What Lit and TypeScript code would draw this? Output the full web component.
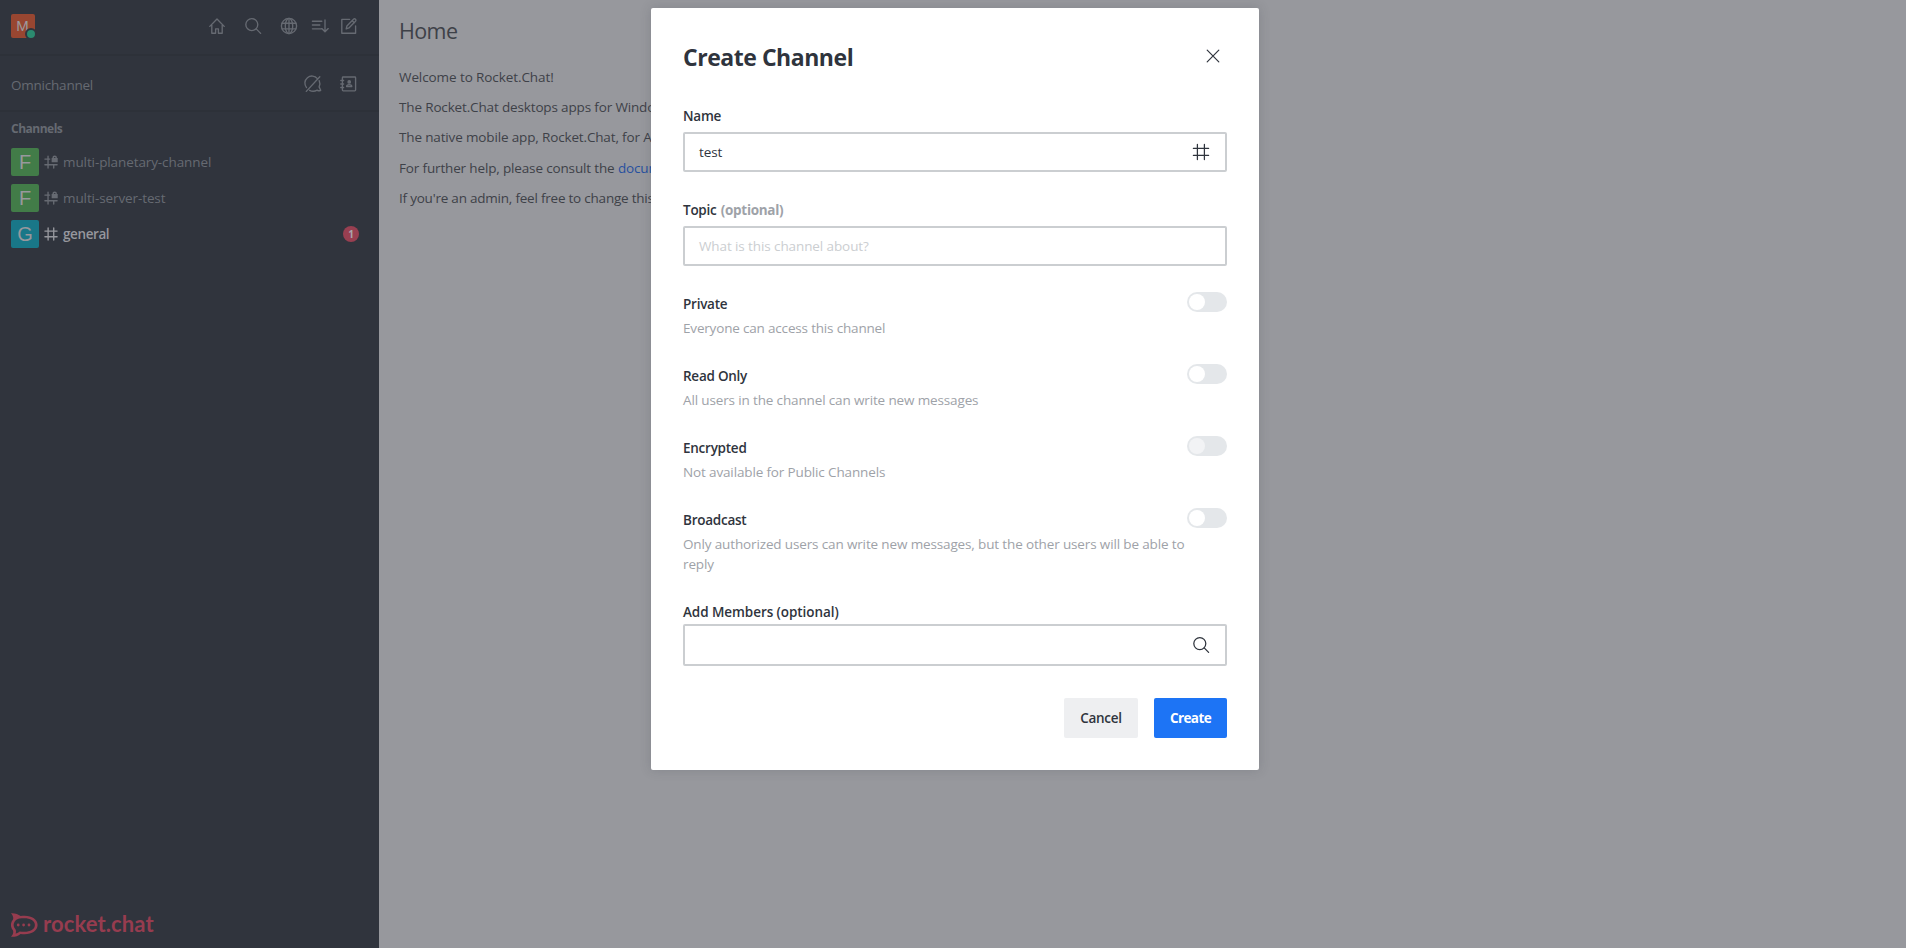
import { LitElement, html, css, svg, nothing } from "lit";
import { customElement, property } from "lit/decorators.js";
import { classMap } from "lit/directives/class-map.js";

const hash = svg`<path d="M6.4 2.4v15.2M13.4 2.4v15.2M2.4 6.4h15.2M2.4 13.4h15.2"/>`;

const icons: Record<string, unknown> = {
  home: svg`<path d="M2.8 10.4L10 3l7.2 7.4M4.8 9v8.2h3.8v-4.4h2.8v4.4h3.8V9"/>`,
  search: svg`<circle cx="8.8" cy="8.6" r="6"/><path d="M13.2 12.9l4.4 4.5"/>`,
  globe: svg`<circle cx="10" cy="10" r="7.6"/><ellipse cx="10" cy="10" rx="3.7" ry="7.6"/><path d="M10 2.4v15.2M3.1 7.2h13.8M3.1 12.8h13.8"/>`,
  sort: svg`<path d="M2.4 5.2h9.4M2.4 9h7.4M2.4 12.8h9.4M15 4v11.6M11.8 12.6l3.2 3.2 3.2-3.2"/>`,
  edit: svg`<path d="M10.6 3.4H2.8v13.8h13.8V9.8"/><path d="M7.2 12.9l.7-3 6.6-6.6c.6-.6 1.4-.6 2 0s.6 1.4 0 2l-6.6 6.6zM13.2 4.7l2.1 2.1"/>`,
  chatOff: svg`<path d="M14.4 4.6A7 7 0 0 0 3.5 13.6M16.2 6.6c.9 2 .9 4.3-.1 6.3l1.6 3.4c-1.3.7-2.5.6-3.5-.2-2.5 1.4-5.2 1.5-7.6.2"/><path d="M3.3 17.4L16.800 2.800"/>`,
  contacts: svg`<rect x="3.4" y="3" width="13.2" height="13.9" rx=".8"/><path d="M1.8 6.5h2.8M1.800 10h2.800M1.800 13.500h2.800"/><circle cx="10.200" cy="7.900" r="1.200" fill="currentColor"/><path d="M7.600 12.500c0-2.500 5.200-2.500 5.200 0z"/>`,
  hash,
  hashLock: svg`<path d="M6.300 2.800v14.800M13.400 13.400v4.200M2.400 6.400h6M2.400 13.400h15.200"/><path stroke="none" fill="currentColor" d="M10.800 5h.9a2.900 3 0 0 1 5.800 0h.9v5.400h-7.600zM13.600 5h2.100a1 1.200 0 0 0-2.100 0z"/>`,
  close: svg`<path d="M4.200 4.200l11.600 11.600M15.800 4.200L4.200 15.800"/>`,
};

@customElement("ui-icon")
class UiIcon extends LitElement {
  static styles = css`
    :host { display: inline-flex; flex: none; width: 20px; height: 20px; }
    .glyph { width: 100%; height: 100%; fill: none; stroke: currentColor; stroke-width: var(--stroke, 1.35); stroke-linejoin: round; stroke-linecap: round; }
  `;
  @property() name = "";
  render() {
    return html`<svg class="glyph" viewBox="0 0 20 20">${icons[this.name]}</svg>`;
  }
}

@customElement("side-bar")
class SideBar extends LitElement {
  static styles = css`
    :host { display: flex; flex-direction: column; flex: none; width: 379px; background: #30343d; color: #666a72; font-size: 13.5px; line-height: 20px; }
    .top { display: flex; align-items: center; height: 56px; padding: 0 20px 2px 11px; border-bottom: 2px solid #2d3139; box-sizing: border-box; }
    .me { position: relative; width: 24px; height: 24px; border-radius: 2px; background: #984631; color: #9c9a9e; font: 15px/23px "Liberation Sans", Arial, sans-serif; text-align: center; margin-right: auto; }
    .me-letter { display: block; padding-right: 1px; }
    .status { position: absolute; right: -2px; bottom: -2px; width: 8px; height: 8px; border: 2px solid #30343d; border-radius: 50%; background: #2b8a6f; }
    .tools { display: flex; align-items: center; gap: 16px; }
    .sort { margin-left: -5px; }
    .edit { margin-left: -7px; }
    .omni { display: flex; align-items: center; gap: 16px; height: 56px; padding: 2px 20px 0 11px; border-bottom: 2px solid #2d3139; box-sizing: border-box; }
    .omni-label { margin-right: auto; letter-spacing: -0.22px; padding-top: 1px; }
    .heading { font-size: 12px; font-weight: 700; letter-spacing: -0.5px; padding: 7px 11px 5px; }
    .list { display: flex; flex-direction: column; }
    .row { display: flex; align-items: center; height: 36px; padding: 0 20px 0 11px; }
    .row ui-icon { width: 16px; height: 16px; margin: 0 4px 0 4px; --stroke: 1.7; }
    .avatar { width: 28px; height: 28px; border-radius: 2px; background: #427c48; color: #97989d; font: 20px/28px "Liberation Sans", Arial, sans-serif; text-align: center; }
    .teal { background: #197788; }
    .name { letter-spacing: -0.1px; margin-right: auto; padding-bottom: 1px; }
    .unread { color: #96979d; }
    .unread .name { font-weight: 600; letter-spacing: -0.4px; padding-bottom: 0; }
    .badge { width: 16px; height: 16px; border-radius: 50%; background: #983f51; color: #aaa5ac; font-size: 10px; font-weight: 700; line-height: 16px; text-align: center; }
    .brand { display: flex; align-items: center; gap: 5px; margin-top: auto; padding: 0 0 11px 11px; color: #963c4f; }
    .mark { width: 27px; height: 24px; }
    .word { font: 700 22px/24px Lato, sans-serif; letter-spacing: 0.1px; padding-bottom: 1px; }
  `;
  rooms = [
    { letter: "F", name: "multi-planetary-channel", icon: "hashLock", unread: 0 },
    { letter: "F", name: "multi-server-test", icon: "hashLock", unread: 0 },
    { letter: "G", name: "general", icon: "hash", unread: 1 },
  ];
  render() {
    return html`
      <div class="top">
        <div class="me"><span class="me-letter">M</span><span class="status"></span></div>
        <div class="tools">
          <ui-icon name="home"></ui-icon><ui-icon name="search"></ui-icon><ui-icon name="globe"></ui-icon>
          <ui-icon class="sort" name="sort"></ui-icon><ui-icon class="edit" name="edit"></ui-icon>
        </div>
      </div>
      <div class="omni">
        <span class="omni-label">Omnichannel</span>
        <ui-icon name="chatOff"></ui-icon><ui-icon name="contacts"></ui-icon>
      </div>
      <div class="heading">Channels</div>
      <div class="list">
        ${this.rooms.map((r) => html`
          <div class=${classMap({ row: true, unread: r.unread > 0 })}>
            <span class=${classMap({ avatar: true, teal: r.letter === "G" })}>${r.letter}</span>
            <ui-icon name=${r.icon}></ui-icon>
            <span class="name">${r.name}</span>
            ${r.unread ? html`<span class="badge">${r.unread}</span>` : nothing}
          </div>`)}
      </div>
      <div class="brand">
        <svg class="mark" viewBox="0 0 27 24" fill="currentColor">
          <path fill-rule="evenodd" d="M0 .2C4 0 7.200 1 9.600 3.100 19 1.500 26.600 5.500 26.600 12S19 22.500 9.600 20.900C7.200 23 4 24 0 23.800 2 21.600 2.600 19.500 2 17.400-.8 14-.8 10 2 6.600 2.600 4.500 2 2.400 0 .2zM4.600 7.600C2 10.400 2 13.600 4.600 16.400c.6 1.500.5 2.700 0 4 1.700-.3 2.900-.9 4-2C17 19.800 23.900 17.400 23.900 12S17 4.200 8.600 5.600C7.100 5.800 5.600 6.600 4.600 7.600z"/>
          <circle cx="7.200" cy="12" r="1.400"/><circle cx="12.600" cy="12" r="1.400"/><circle cx="18" cy="12" r="1.400"/>
        </svg>
        <span class="word">rocket.chat</span>
      </div>`;
  }
}

@customElement("home-page")
class HomePage extends LitElement {
  static styles = css`
    :host { display: block; flex: 1; min-width: 0; padding: 16px 20px; color: #3e4148; font-size: 13.5px; line-height: 20px; white-space: nowrap; background: #97989d; }
    .title { margin: 0 0 21px; font-size: 21.5px; font-weight: 400; line-height: 30px; letter-spacing: -0.6px; }
    .text { margin: 0 0 10px; letter-spacing: -0.15px; }
    .first { letter-spacing: -0.09px; }
    .spaced { margin-top: 11px; }
    .last { letter-spacing: -0.22px; }
    .link { color: #27509f; }
  `;
  render() {
    return html`
      <h1 class="title">Home</h1>
      <p class="text first">Welcome to Rocket.Chat!</p>
      <p class="text">The Rocket.Chat desktops apps for Windows</p>
      <p class="text">The native mobile app, Rocket.Chat, for Android</p>
      <p class="text spaced">For further help, please consult the <span class="link">documentation</span></p>
      <p class="text last">If you're an admin, feel free to change this</p>`;
  }
}

@customElement("create-channel")
class CreateChannel extends LitElement {
  static styles = css`
    :host { display: flex; flex-direction: column; box-sizing: border-box; width: 608px; height: 762px; padding: 32px; border-radius: 2px; background: #fff; box-shadow: 0 0 12px rgba(47, 52, 61, 0.18); color: #2f343d; font-size: 13.5px; line-height: 20px; }
    .header { display: flex; justify-content: space-between; height: 32px; margin-bottom: 34px; }
    .title { margin: 0; padding-top: 1px; font-size: 23px; font-weight: 700; line-height: 32px; letter-spacing: -0.46px; }
    .close { margin: 6px 4px 0 0; --stroke: 1.2; }
    .field { display: flex; flex-direction: column; gap: 6px; margin-bottom: 28px; }
    .label { font-weight: 600; letter-spacing: -0.25px; }
    .hint { color: #9ea2a8; font-weight: 700; letter-spacing: -0.3px; margin-left: 1px; }
    .box { display: flex; align-items: center; justify-content: space-between; box-sizing: border-box; height: 40px; padding: 0 14px; border: 2px solid #cbced1; border-radius: 2px; letter-spacing: -0.1px; }
    .box ui-icon { --stroke: 1.25; }
    .placeholder { color: #cbced1; }
    .toggles { display: flex; flex-direction: column; gap: 26px; margin-top: -2px; }
    .toggle-row { display: flex; justify-content: space-between; align-items: flex-start; }
    .info { width: 504px; padding-top: 2px; }
    .desc { margin-top: 4px; color: #9ea2a8; letter-spacing: -0.14px; }
    .tight { letter-spacing: -0.18px; }
    .switch { flex: none; box-sizing: border-box; width: 40px; height: 20px; padding: 2px; border-radius: 10px; background: #e4e7ea; }
    .knob { width: 16px; height: 16px; border-radius: 50%; background: #fff; }
    .off .knob { background: #f2f3f5; }
    .members { gap: 2px; margin: 28px 0 32px; }
    .members .label { letter-spacing: -0.07px; }
    .members .box { height: 42px; }
    .actions { display: flex; justify-content: flex-end; gap: 16px; }
    .button { box-sizing: border-box; height: 40px; padding: 0; border: 0; border-radius: 2px; font: 600 13.5px/40px "Open Sans", sans-serif; letter-spacing: -0.3px; color: #2f343d; background: #eeeff1; width: 74px; }
    .primary { width: 73px; font-weight: 700; letter-spacing: -0.6px; color: #fff; background: #1d74f5; }
  `;
  options = [
    { label: "Private", desc: "Everyone can access this channel", disabled: false },
    { label: "Read Only", desc: "All users in the channel can write new messages", disabled: false },
    { label: "Encrypted", desc: "Not available for Public Channels", disabled: true },
    { label: "Broadcast", desc: "Only authorized users can write new messages, but the other users will be able to reply", disabled: false },
  ];
  render() {
    return html`
      <div class="header"><h2 class="title">Create Channel</h2><ui-icon class="close" name="close"></ui-icon></div>
      <div class="field">
        <span class="label">Name</span>
        <div class="box"><span>test</span><ui-icon name="hash"></ui-icon></div>
      </div>
      <div class="field">
        <span class="label">Topic <span class="hint">(optional)</span></span>
        <div class="box"><span class="placeholder">What is this channel about?</span></div>
      </div>
      <div class="toggles">
        ${this.options.map((o, i) => html`
          <div class="toggle-row">
            <div class="info">
              <div class="label">${o.label}</div>
              <div class=${classMap({ desc: true, tight: i === 0 })}>${o.desc}</div>
            </div>
            <div class=${classMap({ switch: true, off: o.disabled })}><div class="knob"></div></div>
          </div>`)}
      </div>
      <div class="field members">
        <span class="label">Add Members (optional)</span>
        <div class="box"><span></span><ui-icon name="search"></ui-icon></div>
      </div>
      <div class="actions">
        <button class="button">Cancel</button><button class="button primary">Create</button>
      </div>`;
  }
}

@customElement("app-root")
class AppRoot extends LitElement {
  static styles = css`
    :host { position: relative; display: flex; height: 100vh; overflow: hidden; font-family: "Open Sans", "Noto Sans", sans-serif; }
    .overlay { position: absolute; inset: 0; display: flex; justify-content: center; align-items: flex-start; padding: 8px 0 0 4px; }
  `;
  render() {
    return html`
      <side-bar></side-bar>
      <home-page></home-page>
      <div class="overlay"><create-channel></create-channel></div>`;
  }
}
